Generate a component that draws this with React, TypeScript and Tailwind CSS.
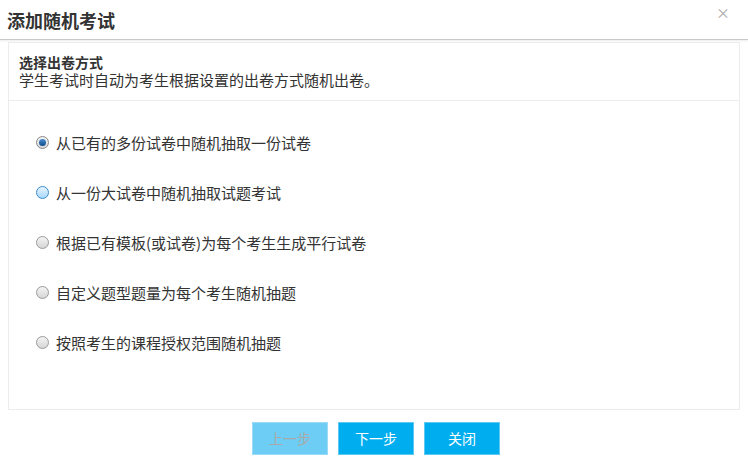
import { useState } from "react"

const options = [
  "从已有的多份试卷中随机抽取一份试卷",
  "从一份大试卷中随机抽取试题考试",
  "根据已有模板(或试卷)为每个考生生成平行试卷",
  "自定义题型题量为每个考生随机抽题",
  "按照考生的课程授权范围随机抽题",
]

function Radio({ checked, hover }: { checked: boolean; hover?: boolean }) {
  if (checked) {
    return (
      <span className="w-[13px] h-[13px] rounded-full border border-[#8a8a8a] bg-gradient-to-b from-[#f4f4f4] to-[#d8d8d8] flex items-center justify-center shrink-0">
        <span className="w-[7px] h-[7px] rounded-full bg-gradient-to-b from-[#4a8fd0] to-[#0d4a8a]" />
      </span>
    )
  }
  return (
    <span
      className={`w-[13px] h-[13px] rounded-full border shrink-0 ${
        hover
          ? "border-[#3c8ccc] bg-gradient-to-b from-[#e6f4ff] to-[#a9d8fb]"
          : "border-[#9a9a9a] bg-gradient-to-b from-[#f4f4f4] to-[#d6d6d6]"
      }`}
    />
  )
}

export default function App() {
  const [selected, setSelected] = useState(0)

  return (
    <div
      className="w-[748px] h-[472px] bg-white flex flex-col text-[#333]"
      style={{ fontFamily: '"Noto Sans CJK SC", "Noto Sans", sans-serif' }}
    >
      {/* Header */}
      <div className="h-[40px] shrink-0 flex items-center justify-between pl-[7px] pr-[18px] border-b border-[#c8c8c8] shadow-[0_1px_2px_rgba(0,0,0,0.08)]">
        <h1 className="text-[18px] font-bold text-[#333] leading-none">添加随机考试</h1>
        <span className="text-[14px] text-[#aaa] leading-none -mt-[16px]">×</span>
      </div>

      {/* Body */}
      <div className="mx-[8px] mt-[2px] h-[368px] border border-[#ececec] flex flex-col">
        <div className="h-[58px] border-b border-[#ececec] px-[10px] pt-[11px] flex flex-col">
          <div className="text-[14px] font-bold leading-[17px] text-[#333]">选择出卷方式</div>
          <div className="text-[15px] leading-[17px] text-[#333]">学生考试时自动为考生根据设置的出卷方式随机出卷。</div>
        </div>
        <div className="flex flex-col pl-[27px] pt-[32px] gap-[32px]">
          {options.map((label, i) => (
            <label
              key={label}
              className="flex items-center gap-[7px] h-[18px] cursor-pointer"
              onClick={() => setSelected(i)}
            >
              <Radio checked={selected === i} hover={i === 1} />
              <span className="text-[15px] text-[#333] leading-none">{label}</span>
            </label>
          ))}
        </div>
      </div>

      {/* Footer */}
      <div className="flex justify-center gap-[10px] mt-[12px] pl-[4px]">
        <button className="w-[76px] h-[33px] bg-[#6dcdf4] border border-[#9adcf7] text-[#a9a9a9] text-[14px]" disabled>
          上一步
        </button>
        <button className="w-[76px] h-[33px] bg-[#00aeef] border border-[#5fc8f2] text-white text-[14px]">
          下一步
        </button>
        <button className="w-[76px] h-[33px] bg-[#00aeef] border border-[#5fc8f2] text-white text-[14px]">
          关闭
        </button>
      </div>
    </div>
  )
}
